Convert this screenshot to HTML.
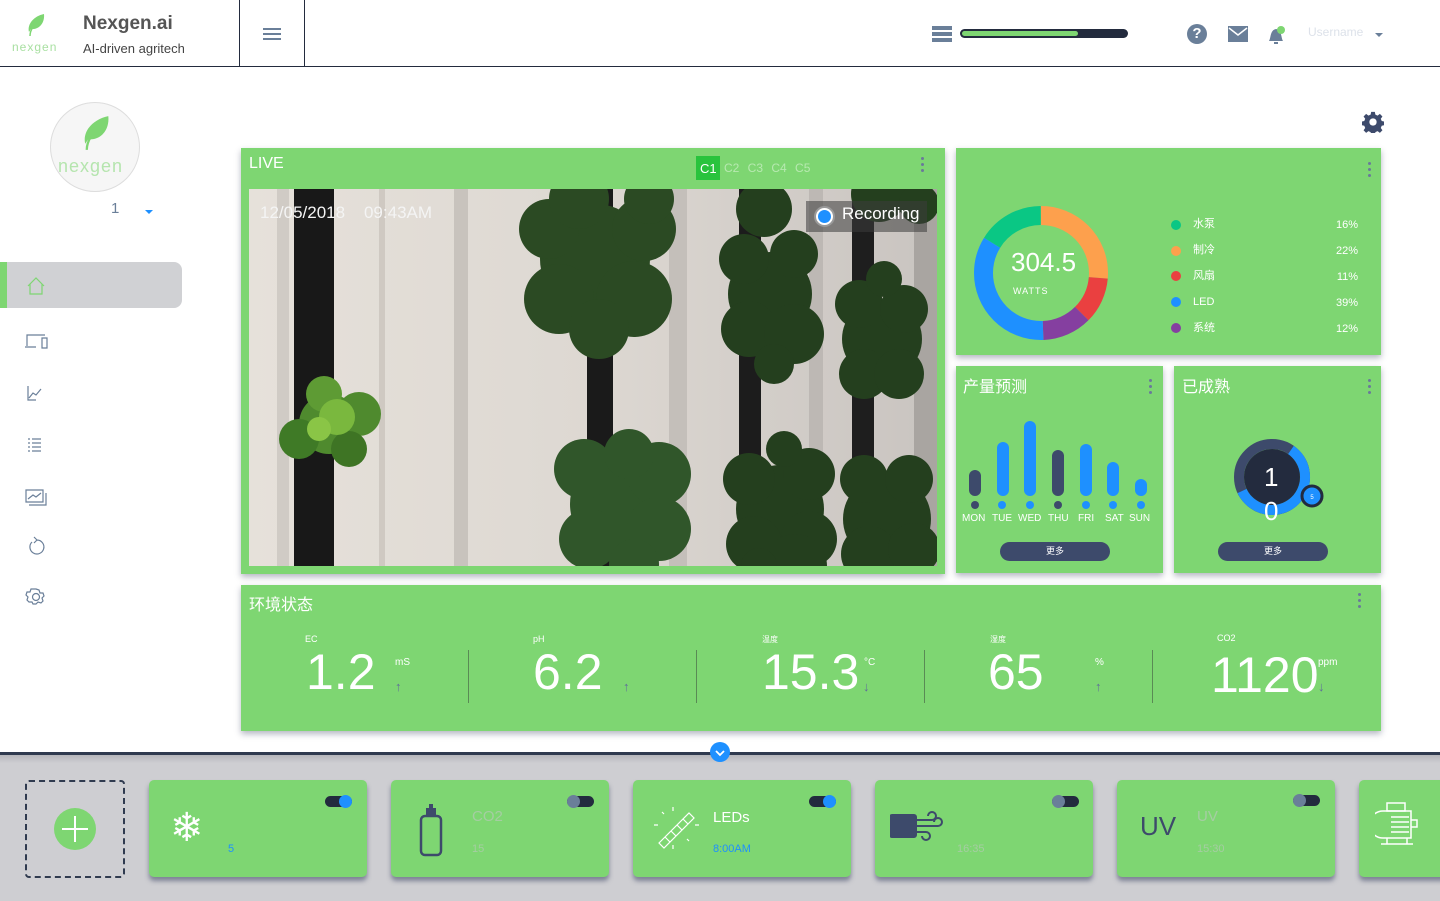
<!DOCTYPE html>
<html><head><meta charset="utf-8">
<style>
*{box-sizing:border-box;margin:0;padding:0}
body{width:1440px;height:901px;position:relative;overflow:hidden;background:#fff;font-family:"Liberation Sans","Noto Sans CJK SC",sans-serif;color:#fff}
.a{position:absolute}
.card{position:absolute;background:#7ed672;box-shadow:0 3px 6px rgba(40,50,80,.35)}
.dots{position:absolute;width:3px}
.dots i{display:block;width:3px;height:3px;border-radius:50%;background:#6a7a9a;margin-bottom:3px}
.t{position:absolute;white-space:nowrap}
.bc{position:absolute;top:780px;width:218px;height:97px;background:#7ed672;border-radius:5px;box-shadow:0 4px 5px rgba(60,70,100,.55)}
.tg{position:absolute;width:27px;height:11px;border-radius:6px;background:#232b3e}
.tg b{position:absolute;top:-1px;width:13px;height:13px;border-radius:50%}
</style></head><body>
<!-- header -->
<div class="a" style="left:0;top:66px;width:1440px;height:1px;background:#232b3e"></div>
<div class="a" style="left:239px;top:0;width:1px;height:66px;background:#232b3e"></div>
<div class="a" style="left:304px;top:0;width:1px;height:66px;background:#232b3e"></div>
<svg class="a" style="left:26px;top:12px" width="20" height="26" viewBox="0 0 20 26"><path d="M3 20 C1 12 8 4 18 2 C19 12 12 18 5 17" fill="#7ed672"/><path d="M4 24 C4 18 8 12 14 8" stroke="#7ed672" stroke-width="1.5" fill="none"/></svg>
<div class="t" style="left:12px;top:40px;font-size:12px;color:#a9e0a2;letter-spacing:1px">nexgen</div>
<div class="t" style="left:83px;top:13px;font-size:19px;font-weight:bold;color:#555;font-family:'Liberation Sans Narrow','Liberation Sans',sans-serif">Nexgen.ai</div>
<div class="t" style="left:83px;top:41px;font-size:13px;color:#444">AI-driven agritech</div>
<div class="a" style="left:263px;top:28px;width:18px;height:2px;background:#6a7f99;box-shadow:0 5px 0 #6a7f99,0 10px 0 #6a7f99"></div>
<div class="a" style="left:932px;top:26px;width:20px;height:4px;background:#6a7f99;box-shadow:0 6px 0 #6a7f99,0 12px 0 #6a7f99"></div>
<div class="a" style="left:960px;top:29px;width:168px;height:9px;border-radius:5px;background:#232b3e"></div>
<div class="a" style="left:962px;top:31px;width:116px;height:5px;border-radius:3px;background:#7ed672"></div>
<div class="a" style="left:1187px;top:24px;width:20px;height:20px;border-radius:50%;background:#6a7f99;font-size:15px;font-weight:bold;text-align:center;line-height:20px">?</div>
<svg class="a" style="left:1228px;top:26px" width="20" height="16"><rect width="20" height="16" fill="#6a7f99"/><path d="M1 2 L10 9 L19 2" stroke="#fff" stroke-width="1.5" fill="none"/></svg>
<svg class="a" style="left:1266px;top:24px" width="20" height="22"><path d="M3 17 C5 14 4 6 10 5 C16 6 15 14 17 17 Z" fill="#6a7f99"/><rect x="8" y="18" width="4" height="2" fill="#6a7f99"/><circle cx="15" cy="6" r="4" fill="#7ed672"/></svg>
<div class="t" style="left:1308px;top:25px;font-size:12px;color:#dde2ea">Username</div>
<div class="a" style="left:1375px;top:33px;border:4px solid transparent;border-top:4px solid #6a7f99;border-bottom:0"></div>
<!-- sidebar -->
<div class="a" style="left:50px;top:102px;width:90px;height:90px;border-radius:50%;background:#f6f6f6;border:1px solid #ddd"></div>
<svg class="a" style="left:80px;top:113px" width="32" height="40" viewBox="0 0 20 26"><path d="M3 20 C1 12 8 4 18 2 C19 12 12 18 5 17" fill="#7ed672"/><path d="M4 24 C4 18 8 12 14 8" stroke="#7ed672" stroke-width="1.5" fill="none"/></svg>
<div class="t" style="left:58px;top:156px;font-size:18px;color:#b5e5ae;letter-spacing:1px">nexgen</div>
<div class="t" style="left:111px;top:200px;font-size:15px;color:#6a7f99">1</div>
<div class="a" style="left:145px;top:210px;border:4px solid transparent;border-top:4px solid #1e90ff;border-bottom:0"></div>
<div class="a" style="left:0;top:262px;width:182px;height:46px;background:#d0d1d4;border-radius:0 8px 8px 0"></div>
<div class="a" style="left:0;top:262px;width:7px;height:46px;background:#7ed672"></div>
<svg class="a" style="left:24px;top:274px" width="26" height="350" fill="none" stroke="#6a7f99" stroke-width="1.2">
<path d="M4 12 L12 4 L20 12 M6 10 V20 H18 V10" stroke="#7ed672"/>
<path d="M1 73 H12 M3 72 V61 H21 M18 64 h5 v10 h-5z"/>
<path d="M4 112 V126 H12 M5 124 L9 119 L12 121 L17 115"/>
<path d="M4 165 h2 M8 165 h9 M4 169 h2 M8 169 h9 M4 173 h2 M8 173 h9 M4 177 h2 M8 177 h9"/>
<path d="M2 216 h17 v12 h-17z M5 231 h17 v-12 M4 225 l5 -4 l3 2 l5 -4"/>
<path d="M8 268 a7 7 0 1 0 5 -2 M13 266 l-3 -3 M13 266 l-3 3"/>
<path d="M12 315 l3 1 l1 3 l3 0 l1 3 l-2 2 l1 3 l-2 2 l-3 -1 l-2 2 l-3 0 l-1 -2 l-3 0 l-2 -2 l1 -3 l-2 -2 l1 -3 l3 0 l1 -3 z"/><circle cx="12" cy="323" r="3.5"/>
</svg>
<!-- gear -->
<svg class="a" style="left:1362px;top:111px" width="22" height="22" viewBox="0 0 24 24"><path fill="#3d4a6b" d="M10 1h4l.6 3 2.4 1 2.5-1.8 2.8 2.8L20.5 8.5l1 2.4 3 .6v4l-3 .6-1 2.4 1.8 2.5-2.8 2.8-2.5-1.8-2.4 1-.6 3h-4l-.6-3-2.4-1-2.5 1.8-2.8-2.8 1.8-2.5-1-2.4-3-.6v-4l3-.6 1-2.4L1.7 6l2.8-2.8L7 5l2.4-1z"/><circle cx="12" cy="12" r="4" fill="#fff"/></svg>
<!-- LIVE -->
<div class="card" style="left:241px;top:148px;width:704px;height:426px"></div>
<div class="t" style="left:249px;top:155px;font-size:16px">LIVE</div>
<div class="a" style="left:696px;top:156px;width:24px;height:24px;background:#29c33d"></div>
<div class="t" style="left:700px;top:161px;font-size:13px">C1</div>
<div class="t" style="left:724px;top:161px;font-size:12px;color:#b7e9b0;word-spacing:5px">C2 C3 C4 C5</div>
<div class="dots" style="left:921px;top:157px"><i></i><i></i><i></i></div>
<svg class="a" style="left:249px;top:189px" width="688" height="377" viewBox="0 0 688 377">
<defs><linearGradient id="bg" x1="0" x2="1"><stop offset="0" stop-color="#e6e1da"/><stop offset=".5" stop-color="#ddd8d2"/><stop offset="1" stop-color="#c9c4c0"/></linearGradient></defs>
<rect width="688" height="377" fill="url(#bg)"/>
<rect x="28" width="12" height="377" fill="#d0cbc5"/><rect x="130" width="6" height="377" fill="#cfc9c2"/><rect x="205" width="14" height="377" fill="#c8c3bd"/><rect x="420" width="18" height="377" fill="#c4bfba"/><rect x="560" width="14" height="377" fill="#bdb8b4"/><rect x="665" width="23" height="377" fill="#a9a5a1"/>
<rect x="45" width="40" height="377" fill="#181818"/>
<rect x="338" width="26" height="377" fill="#1a1a1a"/>
<rect x="490" width="22" height="377" fill="#1c1c1c"/>
<rect x="603" width="22" height="377" fill="#1e1e1e"/>
<g fill="#2b4a23">
<circle cx="346" cy="70" r="55"/><circle cx="300" cy="40" r="30"/><circle cx="395" cy="40" r="32"/><circle cx="310" cy="110" r="35"/><circle cx="385" cy="110" r="38"/><circle cx="350" cy="140" r="30"/><circle cx="330" cy="10" r="30"/><circle cx="400" cy="10" r="25"/>
</g>
<g fill="#30562a">
<circle cx="373" cy="315" r="52"/><circle cx="335" cy="280" r="30"/><circle cx="410" cy="285" r="32"/><circle cx="340" cy="350" r="30"/><circle cx="410" cy="340" r="32"/><circle cx="380" cy="265" r="25"/><circle cx="385" cy="375" r="25"/>
</g>
<g fill="#243f1e">
<circle cx="521" cy="105" r="42"/><circle cx="495" cy="70" r="25"/><circle cx="545" cy="65" r="24"/><circle cx="500" cy="140" r="28"/><circle cx="545" cy="145" r="30"/><circle cx="525" cy="175" r="20"/><circle cx="515" cy="20" r="28"/>
<circle cx="531" cy="320" r="44"/><circle cx="500" cy="290" r="26"/><circle cx="560" cy="285" r="26"/><circle cx="505" cy="355" r="28"/><circle cx="560" cy="350" r="28"/><circle cx="535" cy="260" r="18"/>
<circle cx="633" cy="150" r="40"/><circle cx="610" cy="115" r="24"/><circle cx="655" cy="120" r="24"/><circle cx="615" cy="185" r="25"/><circle cx="650" cy="185" r="25"/><circle cx="635" cy="90" r="18"/>
<circle cx="638" cy="330" r="44"/><circle cx="615" cy="290" r="24"/><circle cx="660" cy="290" r="24"/><circle cx="620" cy="365" r="28"/><circle cx="665" cy="360" r="26"/>
<circle cx="546" cy="377" r="32"/><circle cx="510" cy="377" r="18"/>
<circle cx="630" cy="5" r="28"/><circle cx="670" cy="15" r="20"/>
</g>
<g><circle cx="80" cy="235" r="30" fill="#4f8a2e"/><circle cx="50" cy="250" r="20" fill="#3f7a26"/><circle cx="110" cy="225" r="22" fill="#4f8a2e"/><circle cx="75" cy="205" r="18" fill="#5e9b34"/><circle cx="100" cy="260" r="18" fill="#3e7424"/><circle cx="88" cy="228" r="18" fill="#7ab83e"/><circle cx="70" cy="240" r="12" fill="#8ac546"/></g>
</svg>
<div class="t" style="left:260px;top:203px;font-size:17px;color:#f4f4f4">12/05/2018&nbsp;&nbsp;&nbsp;&nbsp;09:43AM</div>
<div class="a" style="left:806px;top:201px;width:121px;height:31px;background:rgba(60,60,60,.55)"></div>
<div class="a" style="left:814px;top:206px;width:21px;height:21px;border-radius:50%;background:#fff;border:2px solid #999"></div>
<div class="a" style="left:818px;top:210px;width:13px;height:13px;border-radius:50%;background:#1e90ff"></div>
<div class="t" style="left:842px;top:204px;font-size:17px">Recording</div>
<!-- power -->
<div class="card" style="left:956px;top:148px;width:425px;height:207px"></div>
<div class="dots" style="left:1368px;top:162px"><i></i><i></i><i></i></div>
<svg class="a" style="left:974px;top:206px" width="134" height="134" viewBox="0 0 134 134">
<g transform="rotate(-90 67 67)" fill="none" stroke-width="19">
<circle cx="67" cy="67" r="57.5" pathLength="360" stroke="#fda04d" stroke-dasharray="95 265"/>
<circle cx="67" cy="67" r="57.5" pathLength="360" stroke="#ea4040" stroke-dasharray="0 95 40 225"/>
<circle cx="67" cy="67" r="57.5" pathLength="360" stroke="#853fa0" stroke-dasharray="0 135 43 182"/>
<circle cx="67" cy="67" r="57.5" pathLength="360" stroke="#1e90ff" stroke-dasharray="0 178 124 58"/>
<circle cx="67" cy="67" r="57.5" pathLength="360" stroke="#0ac784" stroke-dasharray="0 302 58 0"/>
</g></svg>
<div class="t" style="left:1011px;top:247px;font-size:26px">304.5</div>
<div class="t" style="left:1013px;top:286px;font-size:9px;letter-spacing:1px">WATTS</div>
<div class="a" style="left:1171px;top:220px;width:10px;height:10px;border-radius:50%;background:#0ac784"></div>
<div class="a" style="left:1171px;top:246px;width:10px;height:10px;border-radius:50%;background:#fda04d"></div>
<div class="a" style="left:1171px;top:271px;width:10px;height:10px;border-radius:50%;background:#ea4040"></div>
<div class="a" style="left:1171px;top:297px;width:10px;height:10px;border-radius:50%;background:#1e90ff"></div>
<div class="a" style="left:1171px;top:323px;width:10px;height:10px;border-radius:50%;background:#853fa0"></div>
<div class="t" style="left:1193px;top:211px;font-size:11px;line-height:26px">水泵<br>制冷<br>风扇<br>LED<br>系统</div>
<div class="t" style="left:1336px;top:212px;font-size:11px;line-height:26px;text-align:right">16%<br>22%<br>11%<br>39%<br>12%</div>
<!-- yield -->
<div class="card" style="left:956px;top:366px;width:207px;height:207px"></div>
<div class="t" style="left:963px;top:373px;font-size:16px">产量预测</div>
<div class="dots" style="left:1149px;top:379px"><i></i><i></i><i></i></div>
<div class="a" style="left:969px;top:470px;width:12px;height:26px;border-radius:6px;background:#3d4a6b"></div>
<div class="a" style="left:997px;top:442px;width:12px;height:54px;border-radius:6px;background:#1e90ff"></div>
<div class="a" style="left:1024px;top:421px;width:12px;height:75px;border-radius:6px;background:#1e90ff"></div>
<div class="a" style="left:1052px;top:450px;width:12px;height:46px;border-radius:6px;background:#3d4a6b"></div>
<div class="a" style="left:1080px;top:444px;width:12px;height:52px;border-radius:6px;background:#1e90ff"></div>
<div class="a" style="left:1107px;top:462px;width:12px;height:34px;border-radius:6px;background:#1e90ff"></div>
<div class="a" style="left:1135px;top:479px;width:12px;height:17px;border-radius:6px;background:#1e90ff"></div>
<svg class="a" style="left:956px;top:500px" width="207" height="10"><g fill="#1e90ff"><circle cx="19" cy="5" r="4" fill="#3d4a6b"/><circle cx="46" cy="5" r="4"/><circle cx="74" cy="5" r="4"/><circle cx="102" cy="5" r="4" fill="#3d4a6b"/><circle cx="130" cy="5" r="4"/><circle cx="157" cy="5" r="4"/><circle cx="185" cy="5" r="4"/></g></svg>
<div class="t" style="left:962px;top:513px;font-size:10px">MON</div>
<div class="t" style="left:992px;top:513px;font-size:10px">TUE</div>
<div class="t" style="left:1018px;top:513px;font-size:10px">WED</div>
<div class="t" style="left:1048px;top:513px;font-size:10px">THU</div>
<div class="t" style="left:1078px;top:513px;font-size:10px">FRI</div>
<div class="t" style="left:1105px;top:513px;font-size:10px">SAT</div>
<div class="t" style="left:1129px;top:513px;font-size:10px">SUN</div>
<div class="a" style="left:1000px;top:542px;width:110px;height:19px;border-radius:10px;background:#3d4a6b;font-size:9px;text-align:center;line-height:19px">更多</div>
<!-- mature -->
<div class="card" style="left:1174px;top:366px;width:207px;height:207px"></div>
<div class="t" style="left:1182px;top:373px;font-size:16px">已成熟</div>
<div class="dots" style="left:1368px;top:379px"><i></i><i></i><i></i></div>
<svg class="a" style="left:1232px;top:437px" width="94" height="84" viewBox="0 0 94 84">
<circle cx="40" cy="40" r="33" fill="none" stroke="#3d4a6b" stroke-width="10"/>
<circle cx="40" cy="40" r="33" fill="none" stroke="#1e90ff" stroke-width="10" pathLength="360" stroke-dasharray="210 150" transform="rotate(-55 40 40)"/>
<circle cx="40" cy="40" r="28" fill="#232b3e"/>
<circle cx="80" cy="59" r="10" fill="#1e90ff" stroke="#232b3e" stroke-width="3"/>
<text x="80" y="62" font-size="6" fill="#fff" text-anchor="middle" font-family="Liberation Sans">5</text>
</svg>
<div class="t" style="left:1264px;top:462px;font-size:26px">1</div>
<div class="t" style="left:1264px;top:496px;font-size:26px">0</div>
<div class="a" style="left:1218px;top:542px;width:110px;height:19px;border-radius:10px;background:#3d4a6b;font-size:9px;text-align:center;line-height:19px">更多</div>
<!-- env -->
<div class="card" style="left:241px;top:585px;width:1140px;height:146px"></div>
<div class="t" style="left:249px;top:591px;font-size:16px">环境状态</div>
<div class="dots" style="left:1358px;top:593px"><i></i><i></i><i></i></div>
<div class="a" style="left:468px;top:650px;width:1px;height:53px;background:#5a8a55"></div>
<div class="a" style="left:696px;top:650px;width:1px;height:53px;background:#5a8a55"></div>
<div class="a" style="left:924px;top:650px;width:1px;height:53px;background:#5a8a55"></div>
<div class="a" style="left:1152px;top:650px;width:1px;height:53px;background:#5a8a55"></div>
<div class="t" style="left:305px;top:634px;font-size:9px">EC</div>
<div class="t" style="left:306px;top:643px;font-size:50px">1.2</div>
<div class="t" style="left:395px;top:657px;font-size:10px">mS</div>
<div class="t" style="left:395px;top:679px;font-size:13px;color:#5f6f9a">↑</div>
<div class="t" style="left:533px;top:634px;font-size:9px">pH</div>
<div class="t" style="left:533px;top:643px;font-size:50px">6.2</div>
<div class="t" style="left:623px;top:679px;font-size:13px;color:#5f6f9a">↑</div>
<div class="t" style="left:762px;top:634px;font-size:8px">温度</div>
<div class="t" style="left:762px;top:643px;font-size:50px">15.3</div>
<div class="t" style="left:864px;top:657px;font-size:10px">°C</div>
<div class="t" style="left:863px;top:679px;font-size:13px;color:#5f6f9a">↓</div>
<div class="t" style="left:990px;top:634px;font-size:8px">湿度</div>
<div class="t" style="left:988px;top:643px;font-size:50px">65</div>
<div class="t" style="left:1095px;top:657px;font-size:10px">%</div>
<div class="t" style="left:1095px;top:679px;font-size:13px;color:#5f6f9a">↑</div>
<div class="t" style="left:1217px;top:633px;font-size:9px">CO2</div>
<div class="t" style="left:1211px;top:646px;font-size:50px">1120</div>
<div class="t" style="left:1318px;top:657px;font-size:10px">ppm</div>
<div class="t" style="left:1318px;top:679px;font-size:13px;color:#5f6f9a">↓</div>
<!-- bottom -->
<div class="a" style="left:0;top:755px;width:1440px;height:146px;background:#ceced2"></div>
<div class="a" style="left:0;top:755px;width:1440px;height:8px;background:linear-gradient(#b5b6bb,#ceced2)"></div>
<div class="a" style="left:0;top:752px;width:1440px;height:3px;background:#2f3a4f"></div>
<div class="a" style="left:710px;top:742px;width:20px;height:20px;border-radius:50%;background:#1e90ff"></div>
<svg class="a" style="left:710px;top:742px" width="20" height="20"><path d="M6 9 L10 13 L14 9" stroke="#fff" stroke-width="1.8" fill="none"/></svg>
<div class="a" style="left:25px;top:780px;width:100px;height:98px;border:2px dashed #2f3a4f;border-radius:4px"></div>
<div class="a" style="left:54px;top:808px;width:42px;height:42px;border-radius:50%;background:#7ed672"></div>
<div class="a" style="left:74px;top:816px;width:2px;height:26px;background:#fff"></div>
<div class="a" style="left:62px;top:828px;width:26px;height:2px;background:#fff"></div>
<div class="bc" style="left:149px"></div>
<div class="tg" style="left:325px;top:796px"><b style="left:14px;background:#1e90ff"></b></div>
<div class="t" style="left:170px;top:808px;font-size:40px;line-height:40px">❄</div>
<div class="t" style="left:228px;top:843px;font-size:11px;color:#1e90ff">5</div>
<div class="bc" style="left:391px"></div>
<div class="tg" style="left:567px;top:796px"><b style="left:0;background:#6a7f99"></b></div>
<svg class="a" style="left:418px;top:802px" width="28" height="56"><rect x="3" y="14" width="20" height="39" rx="4" fill="none" stroke="#3d4a6b" stroke-width="2.5"/><rect x="8" y="6" width="10" height="8" fill="#3d4a6b"/><rect x="11" y="2" width="4" height="5" fill="#3d4a6b"/></svg>
<div class="t" style="left:472px;top:808px;font-size:15px;color:#a5cda2">CO2</div>
<div class="t" style="left:472px;top:843px;font-size:11px;color:#a5cda2">15</div>
<div class="bc" style="left:633px"></div>
<div class="tg" style="left:809px;top:796px"><b style="left:14px;background:#1e90ff"></b></div>
<svg class="a" style="left:653px;top:805px" width="46" height="46" fill="none" stroke="#fff" stroke-width="1.2"><path d="M6 38 L36 8 L41 13 L11 43 Z M12 32 l5 5 M18 26 l5 5 M24 20 l5 5 M30 14 l5 5"/><path d="M1 20 h4 M42 20 h4 M20 2 v4 M20 40 v4 M9 7 l2 2 M34 34 l2 2"/></svg>
<div class="t" style="left:713px;top:809px;font-size:15px">LEDs</div>
<div class="t" style="left:713px;top:843px;font-size:11px;color:#1e90ff">8:00AM</div>
<div class="bc" style="left:875px"></div>
<div class="tg" style="left:1052px;top:796px"><b style="left:0;background:#6a7f99"></b></div>
<svg class="a" style="left:890px;top:810px" width="56" height="32" fill="none" stroke="#3d4a6b" stroke-width="2"><rect x="0" y="5" width="26" height="22" rx="2" fill="#3d4a6b"/><path d="M18 10 h24 a4 4 0 1 0 -4 -4 M18 16 h30 a4 4 0 1 0 -4 -4 M18 22 h18 a4 4 0 1 1 -4 4"/></svg>
<div class="t" style="left:957px;top:843px;font-size:11px;color:#a5cda2">16:35</div>
<div class="bc" style="left:1117px"></div>
<div class="tg" style="left:1293px;top:795px"><b style="left:0;background:#6a7f99"></b></div>
<div class="t" style="left:1140px;top:811px;font-size:26px;color:#3d4a6b">UV</div>
<div class="t" style="left:1197px;top:808px;font-size:15px;color:#a5cda2">UV</div>
<div class="t" style="left:1197px;top:843px;font-size:11px;color:#a5cda2">15:30</div>
<div class="bc" style="left:1359px;width:100px"></div>
<svg class="a" style="left:1375px;top:802px" width="52" height="46" fill="none" stroke="#fff" stroke-width="1.5"><rect x="12" y="1" width="18" height="8"/><path d="M8 9 h28 v27 H8 a9 9 0 0 1 0 -27 Z M36 18 h6 v7 h-6 M16 15 h18 M16 20 h18 M16 25 h18 M16 30 h18 M12 36 h20 v6 h-20 z M6 42 h32"/></svg>
</body></html>
